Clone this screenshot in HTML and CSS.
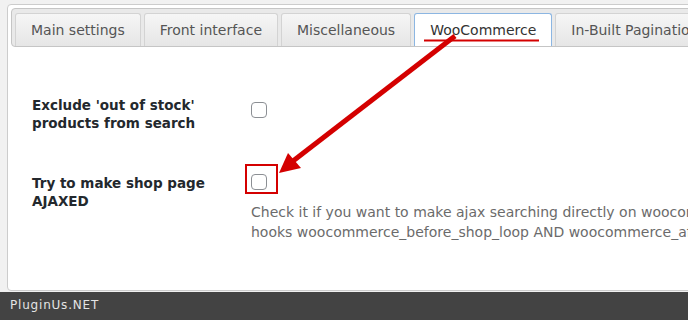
FILE: index.html
```html
<!DOCTYPE html>
<html lang="en">
<head>
  <meta charset="utf-8">
  <title>WooCommerce settings</title>
  <link rel="stylesheet" href="styles.css">
</head>
<body>
  <div class="panel">
    <ul class="tabs">
      <li class="tab">Main settings</li>
      <li class="tab">Front interface</li>
      <li class="tab">Miscellaneous</li>
      <li class="tab active">WooCommerce</li>
      <li class="tab">In-Built Pagination</li>
    </ul>
    <div class="settings">
      <div class="row">
        <div class="label">Exclude 'out of stock' products from search</div>
        <div class="field">
          <input type="checkbox" class="check check-low">
        </div>
      </div>
      <div class="row">
        <div class="label">Try to make shop page AJAXED</div>
        <div class="field">
          <input type="checkbox" class="check">
          <p class="desc">Check it if you want to make ajax searching directly on woocommerce shop page. BUT! It is not possible for all themes<br>hooks woocommerce_before_shop_loop AND woocommerce_after_shop_loop</p>
        </div>
      </div>
    </div>
  </div>
  <div class="footer">PluginUs.NET</div>

  <!-- annotation drawn over the screenshot -->
  <svg class="marks" width="688" height="320" viewBox="0 0 688 320">
    <line x1="424" y1="40.5" x2="539" y2="40.5" stroke="#d40000" stroke-width="2"/>
    <rect x="246" y="165" width="31" height="28" fill="none" stroke="#d40000" stroke-width="2"/>
    <line x1="455" y1="36" x2="293" y2="161" stroke="#d40000" stroke-width="5"/>
    <polygon points="279,173 288,153 301,168" fill="#d40000"/>
  </svg>
</body>
</html>
```

FILE: styles.css
```css
html, body
{
  margin: 0;
  height: 320px;
  overflow: hidden;
}
body
{
  position: relative;
  display: flex;
  flex-direction: column;
  background: #f1f1f1;
  font-family: "DejaVu Sans", Verdana, sans-serif;
}
.panel
{
  flex: 1;
  margin: 4px -30px 1px 7px;
  padding: 3px;
  background: #fff;
  border: 1px solid #ccc;
  border-radius: 4px;
}
.tabs
{
  display: flex;
  gap: 3px;
  margin: 0;
  padding: 4px 3px 0;
  list-style: none;
  background: #e9e9e9;
  border: 1px solid #c5c5c5;
  border-radius: 4px;
  overflow: hidden;
}
.tab
{
  flex-shrink: 0;
  padding: 8px 15px 7px;
  font-size: 14px;
  line-height: 17px;
  color: #555;
  white-space: nowrap;
  background: linear-gradient(#f6f6f6, #e6e6e6);
  border: 1px solid #d3d3d3;
  border-bottom: none;
  border-radius: 3px 3px 0 0;
}
.tab.active
{
  margin-bottom: -1px;
  padding-bottom: 8px;
  color: #333;
  background: #fff;
  border-color: #8cb6e2;
}
.settings
{
  padding: 49px 0 0 21px;
}
.row
{
  display: flex;
  margin-bottom: 42px;
}
.label
{
  flex: 0 0 190px;
  margin-right: 29px;
  font-size: 13.5px;
  font-weight: bold;
  line-height: 18px;
  color: #23282d;
}
.check
{
  display: block;
  width: 16px;
  height: 16px;
  margin: 0;
  -webkit-appearance: none;
  appearance: none;
  background: #fff;
  border: 1px solid #8c8f94;
  border-radius: 4px;
}
.check-low
{
  margin-top: 6px;
}
.desc
{
  margin: 12px 0 0;
  font-size: 14px;
  line-height: 20px;
  color: #6b6b6b;
  white-space: nowrap;
}
.footer
{
  height: 28px;
  padding-left: 10px;
  font-size: 12px;
  line-height: 26px;
  letter-spacing: 0.8px;
  color: #e4e4e4;
  background: #434343;
}
.marks
{
  position: absolute;
  top: 0;
  left: 0;
  pointer-events: none;
}
```
